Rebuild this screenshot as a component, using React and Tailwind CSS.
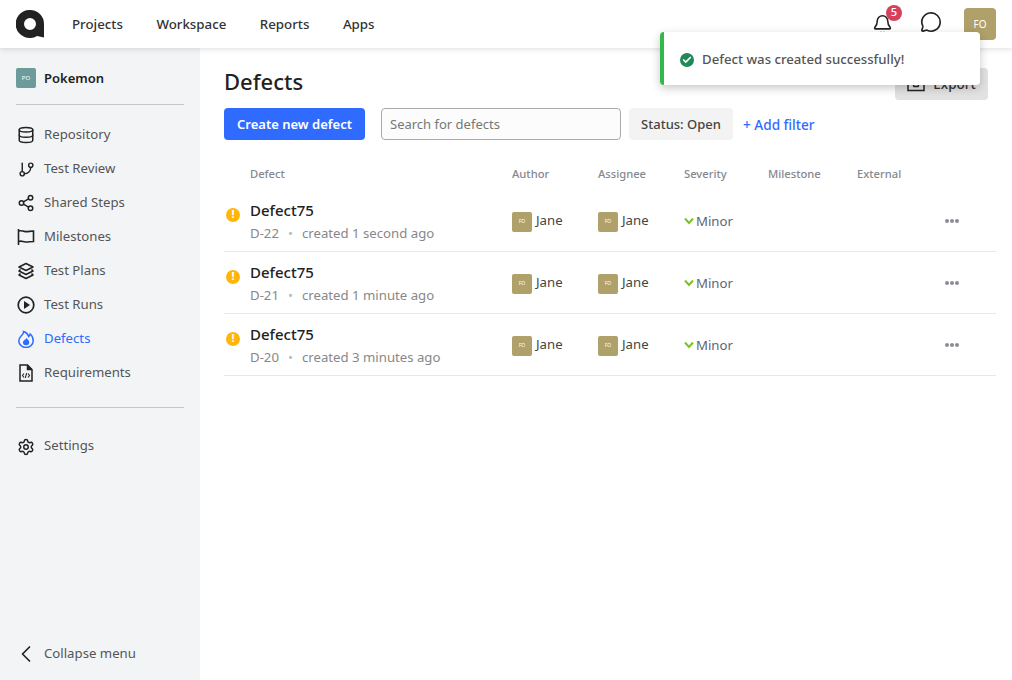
import { Bell, MessageCircle, Database, GitBranch, Share2, ChevronLeft, Settings, Check } from 'lucide-react'

const GRID = 'grid grid-cols-[26px_262px_86px_86px_84px_89px_88px_1fr]'

function Logo() {
  return (
    <svg width="28" height="28" viewBox="0 0 28 28">
      <path fill="#222" fillRule="evenodd" d="M14 0a14 14 0 0 1 14 14v13.500l-7-1.600A14 14 0 1 1 14 0Zm0 8a6 6 0 1 0 0 12 6 6 0 0 0 0-12Z" />
    </svg>
  )
}

function FlagIcon() {
  return (
    <svg width="18" height="18" viewBox="0 0 18 18" fill="none" stroke="#222" strokeWidth="1.600">
      <path d="M1.500 1v16" />
      <path d="M1.500 3c3-1 4 .4 7 .6 2.500.2 5-.6 8-.6v10.500c-3 0-5.500.7-8 .5-3-.3-4-1.500-7-.5" />
    </svg>
  )
}

function LayersIcon() {
  return (
    <svg width="18" height="18" viewBox="0 0 18 18" fill="none" stroke="#222" strokeWidth="1.600" strokeLinejoin="round">
      <path d="M9 1.500 16 5 9 8.500 2 5Z" />
      <path d="M3.500 7.500 2 9l7 3.500L16 9l-1.500-1.500" />
      <path d="M3.500 11.500 2 13l7 3.500 7-3.500-1.500-1.500" />
    </svg>
  )
}

function PlayIcon() {
  return (
    <svg width="18" height="18" viewBox="0 0 18 18">
      <circle cx="9" cy="9" r="7.800" fill="none" stroke="#222" strokeWidth="1.700" />
      <path d="M7 5v8l6-4Z" fill="#222" />
    </svg>
  )
}

function FlameIcon() {
  return (
    <svg width="18" height="18" viewBox="0 0 18 18">
      <path d="M6.500 1.500c.3 2-1 3-2.400 4.500C2.800 7.500 1.800 9 1.800 10.800a7.200 6.700 0 0 0 14.400 0c0-2.800-1.200-5.300-3-6.800-.2 1.200-.7 2-1.500 2.500C11 4.300 9 2.300 6.500 1.500Z" fill="none" stroke="#2f6bff" strokeWidth="1.500" />
      <path d="M9.500 8c.3 1.200 2.800 2 2.800 4.300a3.200 3 0 0 1-6.400 0C5.900 10.800 8.500 10 9.500 8Z" fill="#2f6bff" />
    </svg>
  )
}

function FileCodeIcon() {
  return (
    <svg width="18" height="18" viewBox="0 0 18 18" fill="none" stroke="#222" strokeWidth="1.500">
      <path d="M3 1h7.500L15 5.500V17H3Z" />
      <path d="M10.500 1v4.500H15" fill="#222" />
      <path d="M7 9.500 5.500 11.500 7 13.500M11 9.500l1.500 2-1.500 2M9.700 9.200l-1.400 4.600" strokeWidth="1.100" />
    </svg>
  )
}

function InboxIcon() {
  return (
    <svg width="18" height="16" viewBox="0 0 18 16" fill="none" stroke="#222" strokeWidth="1.500">
      <path d="M1 8v6.500h16V8h-5l-1 2.500H7L6 8Z" />
      <path d="M4 8V2h10v6" />
    </svg>
  )
}

const navItems = [
  { label: 'Repository', icon: <Database size={18} color="#222" strokeWidth={2} /> },
  { label: 'Test Review', icon: <GitBranch size={17} color="#222" strokeWidth={2} /> },
  { label: 'Shared Steps', icon: <Share2 size={18} color="#222" strokeWidth={2} /> },
  { label: 'Milestones', icon: <FlagIcon /> },
  { label: 'Test Plans', icon: <LayersIcon /> },
  { label: 'Test Runs', icon: <PlayIcon /> },
  { label: 'Defects', icon: <FlameIcon />, active: true },
  { label: 'Requirements', icon: <FileCodeIcon /> },
]

const defects = [
  { id: 'D-22', created: 'created 1 second ago' },
  { id: 'D-21', created: 'created 1 minute ago' },
  { id: 'D-20', created: 'created 3 minutes ago' },
]

function Person() {
  return (
    <div className="flex items-center">
      <span className="mt-[2px] flex h-5 w-5 items-center justify-center rounded-[2px] bg-[#b0a069] text-[5px] text-white">FO</span>
      <span className="mb-[1px] ml-1 text-[13.2px] leading-5 text-[#444]">Jane</span>
    </div>
  )
}

function Header() {
  return (
    <header className="relative z-10 flex h-12 shrink-0 items-center bg-white pl-4 pr-4 shadow-[0_1px_6px_rgba(0,0,0,0.14)]">
      <Logo />
      <nav className="ml-7 flex gap-[33.500px] pt-[2px] text-[13.3px] font-medium text-[#333]">
        <span>Projects</span>
        <span>Workspace</span>
        <span>Reports</span>
        <span>Apps</span>
      </nav>
      <div className="ml-auto flex items-center">
        <div className="relative">
          <Bell size={21} color="#222" strokeWidth={1.800} />
          <span className="absolute -right-[9px] -top-[9px] flex h-4 w-4 items-center justify-center rounded-full bg-[#d6405c] text-[11px] font-medium text-white">5</span>
        </div>
        <MessageCircle size={22} color="#222" strokeWidth={1.800} className="mb-[4px] ml-[27px]" />
        <span className="ml-[22px] flex h-8 w-8 items-center justify-center rounded-[4px] bg-[#b0a069] text-[10px] text-white">FO</span>
      </div>
    </header>
  )
}

function Sidebar() {
  return (
    <aside className="flex w-[200px] shrink-0 flex-col bg-[#f3f4f6] px-4 pb-4 pt-5">
      <div className="flex h-5 items-center gap-2 text-[13px] font-semibold text-[#222]">
        <span className="flex h-5 w-5 items-center justify-center rounded-[2px] bg-[#6d9a9a] text-[6px] font-normal text-white">PO</span>
        <span className="leading-[18px]">Pokemon</span>
      </div>
      <hr className="mt-4 border-[#c2c4c8]" />
      <ul className="mt-3">
        {navItems.map((item) => (
          <li key={item.label} className={`flex h-[34px] items-center gap-[10px] text-[13.2px] ${item.active ? 'text-[#2f6bff]' : 'text-[#555]'}`}>
            <span className="mt-[2px] flex h-[18px] w-[18px] shrink-0 translate-x-[1px] items-center justify-center">{item.icon}</span>
            <span className="pt-[2px]">{item.label}</span>
          </li>
        ))}
      </ul>
      <hr className="mt-[18px] border-[#c2c4c8]" />
      <div className="mt-5 flex h-[34px] items-center gap-[10px] text-[13.2px] text-[#555]">
        <span className="mt-[3px] translate-x-[1px]"><Settings size={18} color="#222" strokeWidth={2} /></span>
        <span className="pt-[2px]">Settings</span>
      </div>
      <div className="mt-auto flex items-center gap-[10px] text-[13.2px] text-[#555]">
        <span className="flex h-[18px] w-[18px] translate-x-[1px] items-center justify-center"><ChevronLeft size={28} color="#222" strokeWidth={1.500} className="shrink-0" /></span>
        <span>Collapse menu</span>
      </div>
    </aside>
  )
}

function DefectRow({ defect }) {
  return (
    <div className={`${GRID} h-[62px] items-center border-b border-[#e8e8e8]`}>
      <span className="mb-[12px] ml-[2px] flex h-[14px] w-[14px] items-center justify-center rounded-full bg-[#ffb60a] text-[11px] font-bold text-white">!</span>
      <div className="pt-[1px]">
        <div className="text-[15px] font-medium leading-5 text-[#222]">Defect75</div>
        <div className="mt-[4px] text-[13.2px] leading-[18px] text-[#888]">
          {defect.id}
          <span className="mx-[9px] text-[#bbb]">•</span>
          {defect.created}
        </div>
      </div>
      <Person />
      <Person />
      <div className="flex items-center gap-[2px] pt-[2px] text-[13.2px] text-[#5f6573]">
        <svg width="10" height="8" viewBox="0 0 10 8" fill="none" stroke="#7ac41e" strokeWidth="2" className="mb-[1px]"><path d="M1 1.500 5 6l4-4.500" /></svg>
        Minor
      </div>
      <div />
      <div />
      <div className="flex gap-[1px]">
        <span className="h-1 w-1 rounded-full bg-[#8a8d94]" />
        <span className="h-1 w-1 rounded-full bg-[#8a8d94]" />
        <span className="h-1 w-1 rounded-full bg-[#8a8d94]" />
      </div>
    </div>
  )
}

function Main() {
  return (
    <main className="relative min-w-0 flex-1 bg-white pl-6 pr-4 pt-[18px]">
      <div className="flex items-start justify-between pr-2">
        <h1 className="-mt-[1px] text-[22px] font-medium leading-8 text-[#222]">Defects</h1>
        <button className="mt-[2px] flex h-8 w-[93px] items-center justify-center gap-2 rounded-[4px] bg-[#e2e2e2] text-[13.5px] font-medium text-[#333]">
          <InboxIcon />
          Export
        </button>
      </div>
      <div className="mt-2 flex items-center">
        <button className="h-8 w-[141px] rounded-[4px] bg-[#2f6bff] pt-[2px] text-[13px] font-semibold text-white">Create new defect</button>
        <div className="ml-4 flex h-8 w-[240px] items-center rounded-[4px] border border-[#aaa] bg-[#fcfcfc] px-2 pt-[1px] text-[13px] text-[#777]">Search for defects</div>
        <span className="ml-2 flex h-8 w-[104px] items-center justify-center rounded-[4px] bg-[#f3f3f3] pt-[2px] text-[13px] font-medium text-[#444]">Status: Open</span>
        <span className="ml-[10px] pt-[3px] text-[13.6px] font-medium text-[#2f6bff]">+ Add filter</span>
      </div>
      <div className={`${GRID} mt-[18px] h-[32px] items-center text-[11.2px] font-medium text-[#85888f]`}>
        <span />
        <span>Defect</span>
        <span>Author</span>
        <span>Assignee</span>
        <span>Severity</span>
        <span>Milestone</span>
        <span>External</span>
      </div>
      {defects.map((d) => <DefectRow key={d.id} defect={d} />)}
    </main>
  )
}

function Toast() {
  return (
    <div className="absolute left-[660px] top-8 z-20 flex h-[53px] w-[320px] items-center rounded-[4px] border-l-4 border-[#35b84a] bg-white pl-4 pt-[2px] text-[13.2px] font-medium text-[#555] shadow-[0_3px_10px_rgba(0,0,0,0.22)]">
      <span className="mr-2 flex h-[14px] w-[14px] items-center justify-center rounded-full bg-[#1f8a57]">
        <Check size={10} color="white" strokeWidth={4} />
      </span>
      Defect was created successfully!
    </div>
  )
}

export default function App() {
  return (
    <div className="relative flex h-[680px] w-[1012px] flex-col overflow-hidden bg-white font-['Noto_Sans',sans-serif]">
      <Header />
      <div className="flex min-h-0 flex-1">
        <Sidebar />
        <Main />
      </div>
      <Toast />
    </div>
  )
}
